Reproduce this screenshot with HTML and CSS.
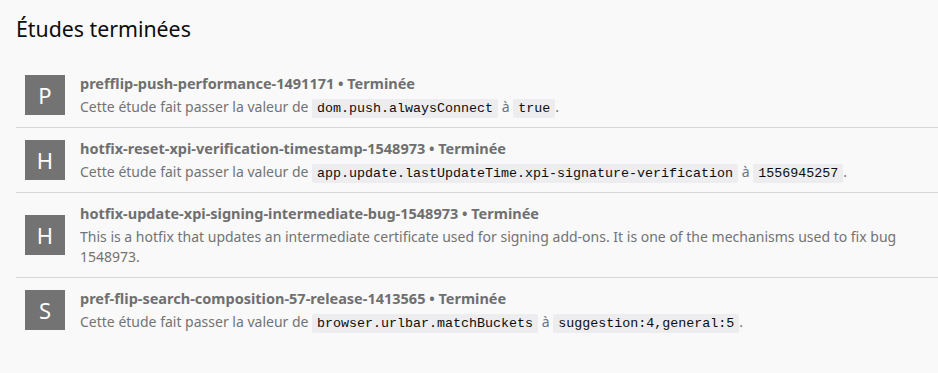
FILE: index.html
```html
<!DOCTYPE html>
<html lang="fr">
<head>
    <meta charset="UTF-8">
    <meta name="viewport" content="width=device-width, initial-scale=1.0">
    <title>Études terminées</title>
    <link rel="stylesheet" href="styles.css">
</head>
<body>
    <div class="page">
        <h1>Études terminées</h1>
        <ul class="study-list">
            <li class="study">
                <div class="study-icon">P</div>
                <div class="study-info">
                    <p class="study-title">prefflip-push-performance-1491171 • Terminée</p>
                    <p class="study-desc">Cette étude fait passer la valeur de <code>dom.push.alwaysConnect</code> à <code>true</code>.</p>
                </div>
            </li>
            <li class="study">
                <div class="study-icon">H</div>
                <div class="study-info">
                    <p class="study-title">hotfix-reset-xpi-verification-timestamp-1548973 • Terminée</p>
                    <p class="study-desc">Cette étude fait passer la valeur de <code>app.update.lastUpdateTime.xpi-signature-verification</code> à <code>1556945257</code>.</p>
                </div>
            </li>
            <li class="study">
                <div class="study-icon">H</div>
                <div class="study-info">
                    <p class="study-title">hotfix-update-xpi-signing-intermediate-bug-1548973 • Terminée</p>
                    <p class="study-desc">This is a hotfix that updates an intermediate certificate used for signing add-ons. It is one of the mechanisms used to fix bug 1548973.</p>
                </div>
            </li>
            <li class="study">
                <div class="study-icon">S</div>
                <div class="study-info">
                    <p class="study-title">pref-flip-search-composition-57-release-1413565 • Terminée</p>
                    <p class="study-desc">Cette étude fait passer la valeur de <code>browser.urlbar.matchBuckets</code> à <code>suggestion:4,general:5</code>.</p>
                </div>
            </li>
        </ul>
    </div>
</body>
</html>
```

FILE: styles.css
```css
body{
    margin: 0;
    background-color: #f9f9fa;
    font-family: "Noto Sans", "Open Sans", sans-serif;
    color: #0c0c0d;
}
.page{
    padding: 14px 0 0 16px;
}
h1{
    margin: 0;
    font-size: 21.3px;
    font-weight: 400;
    line-height: 30px;
}
.study-list{
    list-style: none;
    margin: 19px 0 0 0;
    padding: 0;
}
.study{
    display: flex;
    align-items: center;
    padding: 10px 0 10px 9px;
    border-bottom: 1px solid #d7d7db;
}
.study:last-child{
    border-bottom: none;
}
.study-icon{
    flex: none;
    width: 40px;
    height: 40px;
    background-color: #737373;
    color: #fff;
    font-size: 22px;
    line-height: 40px;
    text-align: center;
}
.study-info{
    margin-left: 15px;
    padding-right: 40px;
}
.study-info p{
    margin: 0;
}
.study-title{
    font-size: 14.5px;
    font-weight: 700;
    line-height: 20px;
    color: #6f6f6f;
}
.study-info .study-desc{
    margin-top: 4px;
    font-size: 14px;
    line-height: 20px;
    color: #737373;
}
code{
    font-family: "Liberation Mono", monospace;
    font-size: 13.33px;
    line-height: 1;
    color: #0c0c0d;
    background-color: #ededf0;
    padding: 2px 5px;
    border-radius: 2px;
}
```
